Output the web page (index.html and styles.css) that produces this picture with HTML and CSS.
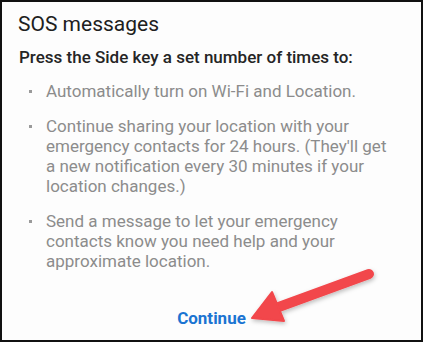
FILE: index.html
```html
<!DOCTYPE html>
<html lang="en">
<head>
  <meta charset="UTF-8" />
  <meta name="viewport" content="width=device-width, initial-scale=1.0"/>
  <title>SOS messages</title>
  <link rel="stylesheet" href="styles.css">
</head>
<body>
  <div class="dialog">
    <h2 class="title">SOS messages</h2>
    <p class="lead">Press the Side key a set number of times to:</p>

    <ul class="steps">
      <li>Automatically turn on Wi-Fi and Location.</li>
      <li>Continue sharing your location with your emergency contacts for 24 hours. (They'll get a new notification every 30 minutes if your location changes.)</li>
      <li>Send a message to let your emergency contacts know you need help and your approximate location.</li>
    </ul>

    <div class="actions">
      <button class="btn-continue">Continue</button>
    </div>

    <!-- callout arrow -->
    <svg class="arrow" width="423" height="342" viewBox="0 0 423 342">
      <defs>
        <filter id="shadow" x="-20%" y="-20%" width="140%" height="140%">
          <feDropShadow dx="1" dy="2" stdDeviation="2" flood-color="#000" flood-opacity="0.25"/>
        </filter>
      </defs>
      <g filter="url(#shadow)" fill="#f2464b" stroke="#f2464b">
        <line x1="369" y1="274" x2="276" y2="308" stroke-width="10" stroke-linecap="round"/>
        <polygon points="252,318 272,292 284,321" stroke-width="2" stroke-linejoin="round"/>
      </g>
    </svg>
  </div>
</body>
</html>
```

FILE: styles.css
```css
* {
  box-sizing: border-box;
}

body {
  margin: 0;
  font-family: Roboto, "Noto Sans", sans-serif;
  background: #fff;
}

.dialog {
  position: relative;
  width: 423px;
  height: 342px;
  border: 2px solid #111;
  background: #fdfdfd;
  padding: 9px 16px 0 16px;
}

.title {
  margin: 0;
  font-size: 21px;
  font-weight: 400;
  color: #202020;
  line-height: 26px;
}

.lead {
  margin: 9px 0 0 1px;
  font-size: 17px;
  font-weight: 500;
  color: #252525;
  line-height: 22px;
}

.steps {
  list-style: none;
  margin: 13px 12px 0 0;
  padding: 0;
}

.steps li {
  position: relative;
  padding-left: 28px;
  margin-bottom: 15px;
  font-size: 17px;
  line-height: 20px;
  color: #8c8c8c;
}

.steps li::before {
  content: "";
  position: absolute;
  left: 11px;
  top: 9px;
  width: 3px;
  height: 3px;
  background: #9a9a9a;
}

.actions {
  display: flex;
  justify-content: center;
  margin-top: 37px;
}

.btn-continue {
  border: none;
  background: none;
  padding: 0;
  font-family: Roboto, sans-serif;
  font-size: 17px;
  font-weight: 700;
  line-height: 20px;
  color: #1a74d2;
}

.arrow {
  position: absolute;
  left: -2px;
  top: -2px;
  pointer-events: none;
}
```
